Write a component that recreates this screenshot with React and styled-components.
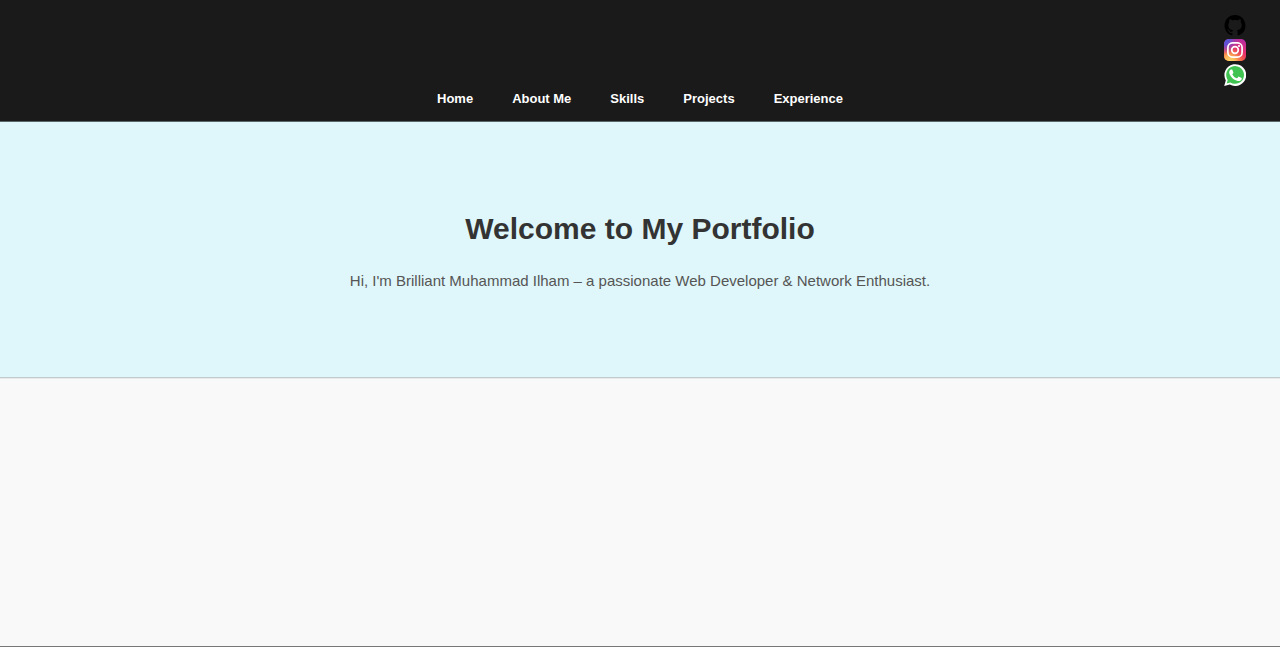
import React from "react";
import styled, { createGlobalStyle } from "styled-components";

const GlobalStyle = createGlobalStyle`
  *, *::before, *::after { box-sizing: border-box; }
  body {
    margin: 0;
    background: #f9f9f9;
    color: #333;
    font-family: Arial, "Liberation Sans", sans-serif;
  }
`;

const Page = styled.div`
  display: flex;
  flex-direction: column;
  min-height: 100vh;
`;

const Header = styled.header`
  display: flex;
  flex-direction: column;
  padding: 14px 34px;
  background: #1a1a1a;
  border-bottom: 1px solid #59666a;
`;

const SocialLinks = styled.div`
  display: flex;
  flex-direction: column;
  align-items: flex-end;
  gap: 3px;
`;

const SocialLink = styled.a`
  display: block;
  width: 22px;
  height: 22px;

  svg {
    display: block;
    width: 100%;
    height: 100%;
  }
`;

const NavList = styled.ul`
  display: flex;
  justify-content: center;
  gap: 39px;
  margin: 5px 0 0;
  padding: 0;
  list-style: none;
`;

const NavLink = styled.a`
  display: block;
  color: #fff;
  font-size: 13px;
  font-weight: bold;
  line-height: 16px;
  text-decoration: none;
`;

const Hero = styled.section`
  padding: 89px 20px 86px;
  background: #dff7fa;
  border-bottom: 1px solid #c4cacb;
  text-align: center;
`;

const HeroTitle = styled.h1`
  margin: 0;
  color: #333;
  font-size: 30px;
  line-height: 36px;
`;

const HeroText = styled.p`
  margin: 24px 0 0;
  color: #555;
  font-size: 15px;
  line-height: 20px;
`;

const Content = styled.main`
  flex: 1;
  border-top: 1px solid #e6eaea;
  border-bottom: 1px solid #777;
`;

const GithubIcon = () => (
  <svg viewBox="-0.4 -0.8 16.8 16.8" aria-hidden="true">
    <path
      fill="#000"
      d="M8 0C3.58 0 0 3.58 0 8c0 3.54 2.29 6.53 5.47 7.59.4.07.55-.17.55-.38 0-.19-.01-.82-.01-1.49-2.01.37-2.53-.49-2.69-.94-.09-.23-.48-.94-.82-1.13-.28-.15-.68-.52-.01-.53.63-.01 1.08.58 1.23.82.72 1.21 1.87.87 2.33.66.07-.52.28-.87.51-1.07-1.78-.2-3.64-.89-3.64-3.95 0-.87.31-1.59.82-2.15-.08-.2-.36-1.02.08-2.12 0 0 .67-.21 2.2.82.64-.18 1.32-.27 2-.27s1.36.09 2 .27c1.53-1.04 2.2-.82 2.2-.82.44 1.1.16 1.92.08 2.12.51.56.82 1.27.82 2.15 0 3.07-1.87 3.75-3.65 3.95.29.25.54.73.54 1.48 0 1.07-.01 1.93-.01 2.2 0 .21.15.46.55.38A8.01 8.01 0 0 0 16 8c0-4.42-3.58-8-8-8z"
    />
  </svg>
);

const InstagramIcon = () => (
  <svg viewBox="0 0 22 22" aria-hidden="true">
    <defs>
      <linearGradient id="insta-base" x1="0.9" y1="0" x2="0.4" y2="1">
        <stop offset="0" stopColor="#b32ea8" />
        <stop offset="0.5" stopColor="#e6306c" />
        <stop offset="1" stopColor="#f5653b" />
      </linearGradient>
      <radialGradient id="insta-warm" cx="0.25" cy="1.05" r="0.75">
        <stop offset="0" stopColor="#ffdc68" />
        <stop offset="0.35" stopColor="#fdb95a" />
        <stop offset="1" stopColor="#f5653b" stopOpacity="0" />
      </radialGradient>
      <radialGradient id="insta-cool" cx="0" cy="0" r="0.7">
        <stop offset="0" stopColor="#405de6" />
        <stop offset="0.4" stopColor="#6a4fd0" />
        <stop offset="1" stopColor="#a03ac0" stopOpacity="0" />
      </radialGradient>
    </defs>
    <rect width="22" height="22" rx="5" fill="url(#insta-base)" />
    <rect width="22" height="22" rx="5" fill="url(#insta-warm)" />
    <rect width="22" height="22" rx="5" fill="url(#insta-cool)" />
    <g fill="none" stroke="#fff" strokeWidth="1.7">
      <rect x="3.9" y="3.9" width="14.2" height="14.2" rx="4.6" />
      <circle cx="11" cy="11" r="3.3" />
    </g>
    <circle cx="15" cy="7" r="1.1" fill="#fff" />
  </svg>
);

const WhatsappIcon = () => (
  <svg viewBox="0 0 22 22" aria-hidden="true">
    <path
      fill="#fff"
      d="M0.2 22 1.8 16.4A10.9 10.9 0 1 1 5.8 20.5Z"
    />
    <path
      fill="#40c351"
      d="M2.7 19.4 3.7 15.9A8.9 8.9 0 1 1 6.4 18.5Z"
    />
    <path
      fill="#fff"
      d="M8.4 6.1c-.2-.5-.4-.5-.7-.5h-.6c-.2 0-.5.1-.8.4-.3.3-1.1 1-1.1 2.5s1.1 3 1.3 3.2c.2.2 2.1 3.4 5.3 4.6 2.6 1 3.1.8 3.7.8.6-.1 1.8-.7 2-1.5.3-.7.3-1.3.2-1.5-.1-.1-.3-.2-.6-.4l-2.1-1c-.3-.1-.5-.2-.7.2l-1 1.2c-.2.2-.4.2-.7.1-.3-.2-1.3-.5-2.5-1.5-.9-.8-1.5-1.8-1.7-2.1-.2-.3 0-.5.1-.6l.5-.6c.2-.2.2-.3.3-.5.1-.2.1-.4 0-.6Z"
    />
  </svg>
);

const socials = [
  { label: "GitHub", Icon: GithubIcon },
  { label: "Instagram", Icon: InstagramIcon },
  { label: "WhatsApp", Icon: WhatsappIcon },
];

const sections = [
  { id: "home", label: "Home" },
  { id: "about", label: "About Me" },
  { id: "skills", label: "Skills" },
  { id: "projects", label: "Projects" },
  { id: "experience", label: "Experience" },
];

export default function App() {
  return (
    <Page>
      <GlobalStyle />
      <Header>
        <SocialLinks>
          {socials.map(({ label, Icon }) => (
            <SocialLink key={label} href="#" aria-label={label}>
              <Icon />
            </SocialLink>
          ))}
        </SocialLinks>
        <nav>
          <NavList>
            {sections.map(({ id, label }) => (
              <li key={id}>
                <NavLink href={`#${id}`}>{label}</NavLink>
              </li>
            ))}
          </NavList>
        </nav>
      </Header>
      <Hero id="home">
        <HeroTitle>Welcome to My Portfolio</HeroTitle>
        <HeroText>
          Hi, I'm Brilliant Muhammad Ilham – a passionate Web Developer &amp; Network Enthusiast.
        </HeroText>
      </Hero>
      <Content />
    </Page>
  );
}
